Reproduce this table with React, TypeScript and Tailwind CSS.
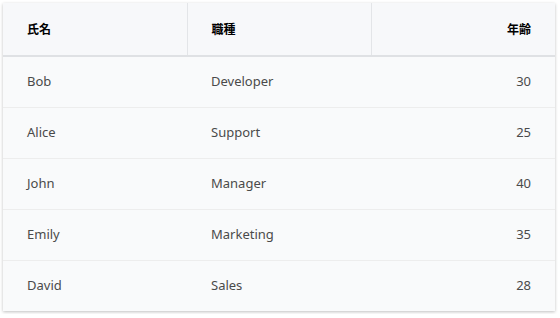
const rows = [
  { name: 'Bob', role: 'Developer', age: 30 },
  { name: 'Alice', role: 'Support', age: 25 },
  { name: 'John', role: 'Manager', age: 40 },
  { name: 'Emily', role: 'Marketing', age: 35 },
  { name: 'David', role: 'Sales', age: 28 },
]

export default function App() {
  return (
    <div className="bg-white p-[3px] font-['Noto_Sans','Noto_Sans_CJK_JP',sans-serif]">
      <div className="w-[552px] bg-[#f9fafb] shadow-[0_1px_3px_rgba(0,0,0,0.25)]">
        <table className="w-full table-fixed border-collapse">
          <thead>
            <tr className="h-[53px] border-b-2 border-[#dfe1e4] bg-[#f7f8fa]">
              <th className="border-r border-[#e3e5e8] px-6 pt-[2px] text-left text-xs font-bold text-black">氏名</th>
              <th className="border-r border-[#e3e5e8] px-6 pt-[2px] text-left text-xs font-bold text-black">職種</th>
              <th className="px-6 pt-[2px] text-right text-xs font-bold text-black">年齢</th>
            </tr>
          </thead>
          <tbody>
            {rows.map((r, i) => (
              <tr
                key={r.name}
                className={i < rows.length - 1 ? 'h-[51px] border-b border-[#ededed]' : 'h-[51px]'}
              >
                <td className="px-6 text-[13px] text-[#4a4a4a]">{r.name}</td>
                <td className="px-6 text-[13px] text-[#4a4a4a]">{r.role}</td>
                <td className="px-6 text-right text-[13px] text-[#4a4a4a]">{r.age}</td>
              </tr>
            ))}
          </tbody>
        </table>
      </div>
    </div>
  )
}
